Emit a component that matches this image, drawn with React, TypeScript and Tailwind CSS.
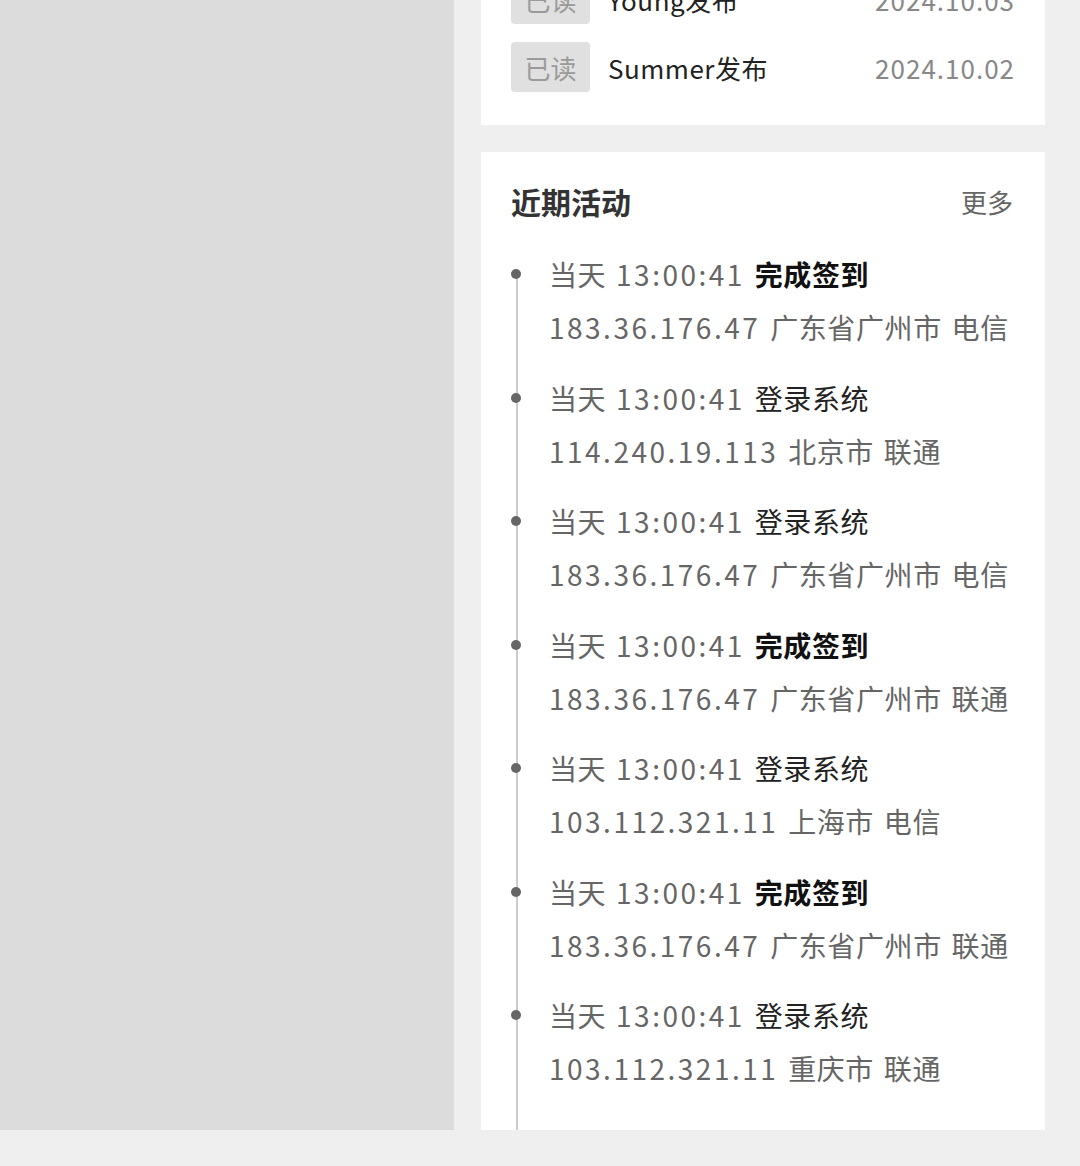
import React from "react";

const notices = [
  { title: "Young发布", date: "2024.10.03" },
  { title: "Summer发布", date: "2024.10.02" },
];

const activities = [
  { action: "完成签到", strong: true, ip: "183.36.176.47", place: "广东省广州市 电信" },
  { action: "登录系统", strong: false, ip: "114.240.19.113", place: "北京市 联通" },
  { action: "登录系统", strong: false, ip: "183.36.176.47", place: "广东省广州市 电信" },
  { action: "完成签到", strong: true, ip: "183.36.176.47", place: "广东省广州市 联通" },
  { action: "登录系统", strong: false, ip: "103.112.321.11", place: "上海市 电信" },
  { action: "完成签到", strong: true, ip: "183.36.176.47", place: "广东省广州市 联通" },
  { action: "登录系统", strong: false, ip: "103.112.321.11", place: "重庆市 联通" },
];

const font = { fontFamily: '"Noto Sans CJK SC", "Noto Sans", sans-serif' };

export default function App() {
  return (
    <div className="min-h-[1166px] w-[1080px] overflow-hidden bg-[#efefef]" style={font}>
      <div className="flex h-[1130px] gap-[27px]">
        {/* left panel */}
        <div className="h-full w-[454px] shrink-0 bg-[#dcdcdc]" />

        {/* right column */}
        <div className="flex w-[564px] flex-col gap-[27px]">
          {/* notice card, scrolled partly out of view */}
          <div className="-mt-[26px] bg-white px-[30px] pb-[33px]">
            <div className="flex flex-col gap-[18px]">
              {notices.map((n) => (
                <div key={n.date} className="flex h-[50px] items-center">
                  <span className="flex h-[50px] w-[79px] items-center justify-center rounded-[4px] bg-[#e0e0e0] text-[26px] text-[#9a9a9a]">
                    已读
                  </span>
                  <span className="ml-[18px] flex-1 text-[26px] tracking-[0.5px] text-[#222]">{n.title}</span>
                  <span className="text-[26px] tracking-[1px] text-[#888]">{n.date}</span>
                </div>
              ))}
            </div>
          </div>

          {/* recent activity */}
          <div className="flex flex-1 flex-col bg-white pl-[30px] pr-[32px] pt-[29px]">
            <div className="flex h-[40px] items-center justify-between">
              <h2 className="text-[30px] font-bold text-[#333]">近期活动</h2>
              <span className="text-[26px] text-[#666]">更多</span>
            </div>

            <div className="relative mt-[27px] flex flex-1 flex-col gap-[17.5px] pl-[38px]">
              <div className="absolute bottom-0 left-[5px] top-[26px] w-[2px] bg-[#cccccc]" />
              {activities.map((a, i) => (
                <div key={i} className="relative flex flex-col text-[28px] tracking-[0.6px] [word-spacing:3px]">
                  <span className="absolute -left-[38px] top-[21px] h-[10px] w-[10px] rounded-full bg-[#666]" />
                  <div className="leading-[53px] text-[#666]">
                    当天 <span className="tracking-[2.5px]">13:00:41</span>{" "}
                    <span className={a.strong ? "font-bold text-[#111]" : "text-[#222]"}>{a.action}</span>
                  </div>
                  <div className="leading-[53px] text-[#666]">
                    <span className="tracking-[2.5px]">{a.ip}</span> {a.place}
                  </div>
                </div>
              ))}
            </div>
          </div>
        </div>
      </div>
    </div>
  );
}
